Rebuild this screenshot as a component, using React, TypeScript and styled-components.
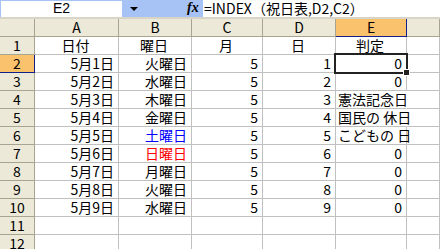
import styled, { createGlobalStyle, css } from "styled-components";

const GlobalStyle = createGlobalStyle`
  html, body {
    margin: 0;
    padding: 0;
    background: #ffffff;
    overflow: hidden;
  }
  body {
    font-family: "Noto Sans CJK JP", "Noto Sans", sans-serif;
    font-size: 14px;
  }
`;

type Align = "left" | "center" | "right";

interface Row {
  date: string;
  youbi: string;
  color?: string;
  month: string;
  day: string;
  result: string;
  spill?: boolean;
}

const filas: Row[] = [
  { date: "5月1日", youbi: "火曜日", month: "5", day: "1", result: "0" },
  { date: "5月2日", youbi: "水曜日", month: "5", day: "2", result: "0" },
  { date: "5月3日", youbi: "木曜日", month: "5", day: "3", result: "憲法記念日", spill: true },
  { date: "5月4日", youbi: "金曜日", month: "5", day: "4", result: "国民の 休日", spill: true },
  { date: "5月5日", youbi: "土曜日", color: "#0000ff", month: "5", day: "5", result: "こどもの 日" },
  { date: "5月6日", youbi: "日曜日", color: "#ff0000", month: "5", day: "6", result: "0" },
  { date: "5月7日", youbi: "月曜日", month: "5", day: "7", result: "0" },
  { date: "5月8日", youbi: "火曜日", month: "5", day: "8", result: "0" },
  { date: "5月9日", youbi: "水曜日", month: "5", day: "9", result: "0" },
];

const colunas = ["A", "B", "C", "D", "E"];

export default function App() {
  return (
    <>
      <GlobalStyle />
      <Janela>
        <FormulaBar>
          <NameBox>E2</NameBox>
          <DropArrow />
          <Fx>fx</Fx>
          <FormulaInput>=INDEX（祝日表,D2,C2）</FormulaInput>
        </FormulaBar>
        <Sheet>
          <Corner />
          {colunas.map((c) => (
            <ColHeader key={c} $selected={c === "E"}>{c}</ColHeader>
          ))}
          <ColHeader />

          <RowHeader>1</RowHeader>
          <Cell $align="center">日付</Cell>
          <Cell $align="center">曜日</Cell>
          <Cell $align="center">月</Cell>
          <Cell $align="center">日</Cell>
          <Cell $align="center">判定</Cell>
          <Cell />

          {filas.map((f, i) => {
            const n = i + 2;
            return [
              <RowHeader key={`h${n}`} $selected={n === 2}>{n}</RowHeader>,
              <Cell key={`a${n}`} $align="right">{f.date}</Cell>,
              <Cell key={`b${n}`} $align="right" $color={f.color}>{f.youbi}</Cell>,
              <Cell key={`c${n}`} $align="right">{f.month}</Cell>,
              <Cell key={`d${n}`} $align="right">{f.day}</Cell>,
              <Cell
                key={`e${n}`}
                $align={f.result === "0" ? "right" : "left"}
                $spill={f.spill}
                $active={n === 2}
              >
                {f.result}
                {n === 2 && (
                  <>
                    <Selection />
                    <FillHandle />
                  </>
                )}
              </Cell>,
              <Cell key={`f${n}`} />,
            ];
          })}

          {[11, 12].map((n) => [
            <RowHeader key={`h${n}`}>{n}</RowHeader>,
            ...[0, 1, 2, 3, 4, 5].map((k) => <Cell key={`x${n}${k}`} />),
          ])}
        </Sheet>
      </Janela>
    </>
  );
}

const Janela = styled.div`
  width: 440px;
  height: 249px;
  overflow: hidden;
  background: #ffffff;
`;

const FormulaBar = styled.div`
  display: flex;
  align-items: stretch;
  height: 19px;
  box-sizing: border-box;
  background: #a7c2f4;
  border-bottom: 2px solid #d8d5c8;
`;

const NameBox = styled.div`
  width: 121px;
  margin: 1px 0 0 1px;
  background: #ffffff;
  text-align: center;
  font-family: "Liberation Sans", Arial, sans-serif;
  font-size: 14px;
  line-height: 15px;
  color: #000;
`;

const DropArrow = styled.div`
  width: 0;
  height: 0;
  margin: 7px 0 0 8px;
  border-left: 4px solid transparent;
  border-right: 4px solid transparent;
  border-top: 4px solid #000;
`;

const Fx = styled.div`
  margin-left: 49px;
  width: 13px;
  font-family: "Liberation Serif", serif;
  font-style: italic;
  font-weight: bold;
  font-size: 14px;
  line-height: 16px;
  color: #000;
`;

const FormulaInput = styled.div`
  flex: 1;
  margin-left: 3px;
  padding-left: 1px;
  background: #ffffff;
  font-size: 14px;
  line-height: 17px;
  white-space: nowrap;
  color: #000;
`;

const Sheet = styled.div`
  display: grid;
  grid-template-columns: 35px 84px 73px 71px 73px 71px 1fr;
  grid-auto-rows: 18px;
`;

const headerBase = css`
  box-sizing: border-box;
  background: #ece9d8;
  border-right: 1px solid #a7a48f;
  border-bottom: 1px solid #a7a48f;
  text-align: center;
  line-height: 17px;
  color: #000;
  font-family: "Noto Sans CJK JP", sans-serif;
  font-size: 14px;
`;

const Corner = styled.div`
  ${headerBase};
`;

const ColHeader = styled.div<{ $selected?: boolean }>`
  ${headerBase};
  ${(p) =>
    p.$selected &&
    css`
      background: #fbc26d;
      border-right-color: #10208a;
      border-bottom-color: #10208a;
    `}
`;

const RowHeader = styled.div<{ $selected?: boolean }>`
  ${headerBase};
  ${(p) =>
    p.$selected &&
    css`
      background: #fbc26d;
      border-right-color: #10208a;
      border-bottom-color: #10208a;
    `}
`;

const Cell = styled.div<{ $align?: Align; $color?: string; $spill?: boolean; $active?: boolean }>`
  position: relative;
  box-sizing: border-box;
  border-right: 1px solid ${(p) => (p.$spill ? "transparent" : "#c0c0c0")};
  border-bottom: 1px solid #c0c0c0;
  padding: 0 4px 0 2px;
  text-align: ${(p) => p.$align || "left"};
  color: ${(p) => p.$color || "#000"};
  line-height: 17px;
  white-space: nowrap;
  overflow: visible;
  z-index: ${(p) => (p.$spill || p.$active ? 1 : 0)};
`;

const Selection = styled.div`
  position: absolute;
  left: -2px;
  top: -2px;
  right: -2px;
  bottom: -2px;
  border: 2px solid #222;
  pointer-events: none;
`;

const FillHandle = styled.div`
  position: absolute;
  right: -4px;
  bottom: -4px;
  width: 5px;
  height: 5px;
  background: #222;
  border: 1px solid #fff;
`;
